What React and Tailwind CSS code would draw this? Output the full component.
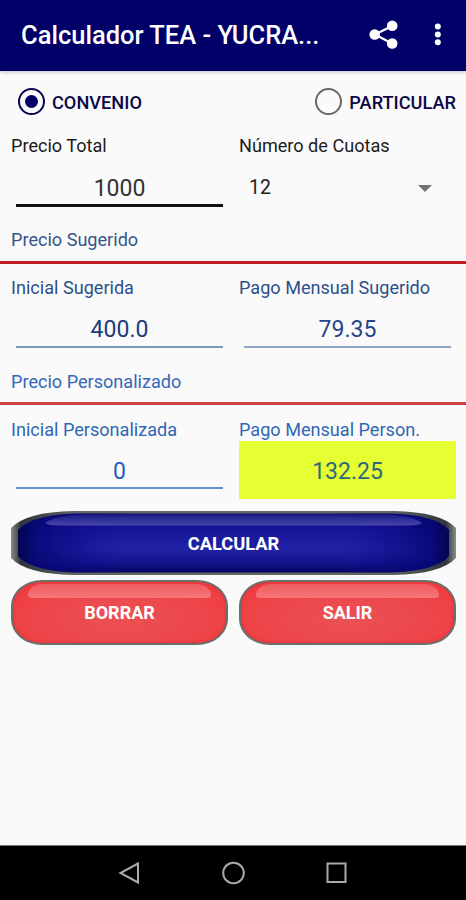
import React from "react";

function Label({ className = "", children }) {
  return (
    <div className={`h-6 whitespace-nowrap text-[18.1px] leading-6 ${className}`}>{children}</div>
  );
}

function Field({ value, className, line }) {
  return (
    <div className={`mr-[5px] ml-[5px] flex h-[37px] items-center justify-center text-[23px] ${line} ${className}`}>
      {value}
    </div>
  );
}

function RedButton({ children }) {
  return (
    <button className="relative h-[65px] flex-1 rounded-[31px/26px] border-2 border-[#6c6e68] bg-[radial-gradient(ellipse_at_50%_60%,#ec5054_0%,#ec484c_50%,#f2383d_100%)] text-[18px] font-bold text-white shadow-[inset_0_0_3px_#e52a2f]">
      <span className="absolute inset-x-[15px] top-[2px] h-[14px] rounded-[18px_18px_5px_5px/13px_13px_4px_4px] bg-linear-to-b from-[#ee5a5e] to-[#f98385]/80" />
      <span className="relative">{children}</span>
    </button>
  );
}

function BlueButtonArt() {
  return (
    <svg className="absolute inset-0 h-full w-full" viewBox="0 0 445 64">
      <defs>
        <linearGradient id="body" x1="0" y1="0" x2="0" y2="1">
          <stop offset="0" stopColor="#0b0b78" />
          <stop offset="0.25" stopColor="#15159a" />
          <stop offset="0.6" stopColor="#2222a6" />
          <stop offset="0.82" stopColor="#15158f" />
          <stop offset="1" stopColor="#040465" />
        </linearGradient>
        <linearGradient id="ends" x1="0" y1="0" x2="1" y2="0">
          <stop offset="0" stopColor="#04044c" />
          <stop offset="0.04" stopColor="#050570" stopOpacity="0.8" />
          <stop offset="0.25" stopColor="#0c0c90" stopOpacity="0" />
          <stop offset="0.75" stopColor="#0c0c90" stopOpacity="0" />
          <stop offset="0.96" stopColor="#050570" stopOpacity="0.8" />
          <stop offset="1" stopColor="#04044c" />
        </linearGradient>
        <linearGradient id="rim" x1="0" y1="0" x2="1" y2="0">
          <stop offset="0" stopColor="#8a8d8a" />
          <stop offset="0.022" stopColor="#30343c" />
          <stop offset="0.15" stopColor="#62665f" />
          <stop offset="0.85" stopColor="#62665f" />
          <stop offset="0.978" stopColor="#30343c" />
          <stop offset="1" stopColor="#8a8d8a" />
        </linearGradient>
        <linearGradient id="gloss" x1="0" y1="0" x2="0" y2="1">
          <stop offset="0" stopColor="#1b1b86" />
          <stop offset="1" stopColor="#4646ac" />
        </linearGradient>
      </defs>
      <path d="M0 17Q15 1 62 0H383Q430 1 445 17V47Q430 63 383 64H62Q15 63 0 47Z" fill="url(#rim)" />
      <path id="blue" d="M7 19Q20 4 66 2.5H379Q425 4 438 19V45Q425 60 379 61.5H66Q20 60 7 45Z" fill="url(#body)" />
      <path d="M7 19Q20 4 66 2.5H379Q425 4 438 19V45Q425 60 379 61.5H66Q20 60 7 45Z" fill="url(#ends)" />
      <path d="M34 12Q44 4 78 3.5H367Q401 4 411 12Q408 14.5 396 14.5H49Q37 14.5 34 12Z" fill="url(#gloss)" />
    </svg>
  );
}

export default function App() {
  return (
    <div className="flex h-[900px] w-[466px] flex-col overflow-hidden bg-[#fafafa] font-['Roboto',sans-serif]">
      <header className="flex h-[71px] shrink-0 items-center bg-[#000068] pl-[21px] text-white shadow-[0_1px_4px_rgba(0,0,0,0.25)]">
        <h1 className="w-[340px] whitespace-nowrap text-[25.5px] font-medium">Calculador TEA - YUCRA...</h1>
        <svg className="ml-[5px] h-9 w-9 shrink-0" viewBox="0 0 36 36" fill="#fff">
          <path d="M26 8 9 16.5l17 9" fill="none" stroke="#fff" strokeWidth="2.2" />
          <circle cx="26.2" cy="7.8" r="5.3" />
          <circle cx="8.7" cy="16.5" r="5.3" />
          <circle cx="26.2" cy="25.5" r="5.3" />
        </svg>
        <svg className="ml-[26px] h-9 w-[18px] shrink-0" viewBox="0 0 18 36" fill="#fff">
          <circle cx="9.8" cy="8.5" r="3" />
          <circle cx="9.8" cy="16.5" r="3" />
          <circle cx="9.8" cy="24.3" r="3" />
        </svg>
      </header>

      <main className="flex flex-1 flex-col">
        <div className="flex h-[62px] items-center justify-between pr-[10px] pl-[18px] text-[18.2px] font-medium text-[#0b0747]">
          <div className="flex items-center gap-[7px]">
            <span className="flex h-[27px] w-[27px] items-center justify-center rounded-full border-[2.5px] border-[#08064f]">
              <span className="h-[13px] w-[13px] rounded-full bg-[#000068]" />
            </span>
            <span className="pt-px">CONVENIO</span>
          </div>
          <div className="flex items-center gap-[7px]">
            <span className="h-[27px] w-[27px] rounded-full border-[2.5px] border-[#686868]" />
            <span className="pt-px">PARTICULAR</span>
          </div>
        </div>

        <section className="mt-px grid h-[94px] grid-cols-2 gap-x-[11px] pr-[10px] pl-[11px] text-[#1c1c1c]">
          <div>
            <Label>Precio Total</Label>
            <Field value="1000" line="mt-[12px] border-b-[3px] border-[#111111]" className="pt-[4px] text-[#333333]" />
          </div>
          <div>
            <Label>Número de Cuotas</Label>
            <div className="mt-[12px] flex h-[35px] items-center justify-between pt-px pr-[24px] pl-[10px] text-[19.5px] text-[#222222]">
              12
              <span className="h-0 w-0 border-x-[7px] border-t-[7px] border-x-transparent border-t-[#727272]" />
            </div>
          </div>
        </section>

        <Label className="pl-[11px] text-[#34568b]">Precio Sugerido</Label>
        <div className="mt-[9px] h-[3px] bg-[#c01d1d]" />

        <section className="mt-[12px] grid h-[94px] grid-cols-2 gap-x-[11px] pr-[10px] pl-[11px] text-[#2c508b]">
          <div>
            <Label>Inicial Sugerida</Label>
            <Field value="400.0" line="mt-[11px] border-b-2 border-[#8099b5]" className="pt-[4px] text-[#1d3b7a]" />
          </div>
          <div>
            <Label>Pago Mensual Sugerido</Label>
            <Field value="79.35" line="mt-[11px] border-b-2 border-[#8ea6c4]" className="pt-[4px] text-[#24458c]" />
          </div>
        </section>

        <Label className="pl-[11px] text-[#3568b8]">Precio Personalizado</Label>
        <div className="mt-[8px] h-[3px] bg-[#cb4040]" />

        <section className="mt-[13px] grid h-[82px] grid-cols-2 gap-x-[11px] pr-[10px] pl-[11px] text-[#2f67b5]">
          <div>
            <Label>Inicial Personalizada</Label>
            <Field value="0" line="mt-[10px] border-b-2 border-[#6a91c6]" className="pt-[5px] text-[#2560b5]" />
          </div>
          <div>
            <Label>Pago Mensual Person.</Label>
            <div className="-mt-px flex h-[58px] items-center justify-center bg-[#e6ff33] pt-[5px] text-[23px] text-[#2c6878]">132.25</div>
          </div>
        </section>

        <div className="mt-[11px] flex flex-col gap-[5px] pr-[10px] pl-[11px]">
          <button className="relative h-[64px] w-full pt-px text-[18.3px] font-bold text-white">
            <BlueButtonArt />
            <span className="relative">CALCULAR</span>
          </button>
          <div className="flex gap-[11px]">
            <RedButton>BORRAR</RedButton>
            <RedButton>SALIR</RedButton>
          </div>
        </div>
      </main>

      <nav className="flex h-[55px] shrink-0 items-center justify-center gap-[79px] border-t border-[#777777] bg-black">
        <svg className="h-6 w-6" viewBox="0 0 24 24" fill="none" stroke="#aaa" strokeWidth="2">
          <path d="M20 2.5v19L2.5 12Z" />
        </svg>
        <svg className="h-6 w-6" viewBox="0 0 24 24" fill="none" stroke="#aaa" strokeWidth="2">
          <circle cx="12.5" cy="12" r="10.3" />
        </svg>
        <svg className="h-6 w-6" viewBox="0 0 24 24" fill="none" stroke="#aaa" strokeWidth="2">
          <rect x="3.5" y="2.5" width="18" height="18.5" />
        </svg>
      </nav>
    </div>
  );
}
